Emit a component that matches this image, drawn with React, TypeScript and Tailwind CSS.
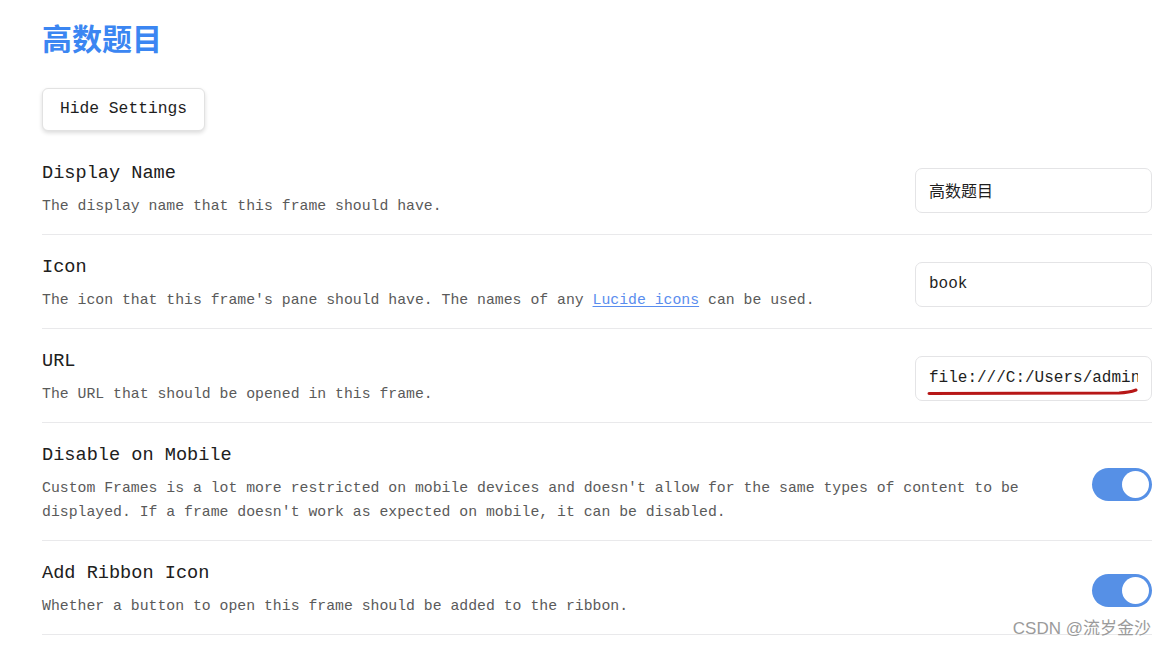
import { useState } from "react";

const mono = "font-['Liberation_Mono','Noto_Sans_CJK_SC',monospace]";

type RowProps = {
  title: string;
  children: React.ReactNode;
  control: React.ReactNode;
};

const SettingRow = ({ title, children, control }: RowProps) => {
  return (
    <div className="flex items-center gap-10 border-b border-[#e9e9eb] pt-[21px] pb-[16px]">
      <div className="flex-1 min-w-0">
        <div className="text-[18.6px] leading-[24px] text-[#202020]">{title}</div>
        <div className="mt-[8px] text-[14.8px] leading-[24px] text-[#5a5a5a]">{children}</div>
      </div>
      {control}
    </div>
  );
};

const TextInput = ({ value }: { value: string }) => (
  <input
    readOnly
    value={value}
    className={`w-[237px] h-[45px] shrink-0 rounded-[7px] border border-[#e4e4e6] bg-white px-[13px] text-[16px] text-[#1e1e1e] outline-none ${mono}`}
  />
);

const Toggle = () => {
  const [on, setOn] = useState(true);
  return (
    <button
      onClick={() => setOn(!on)}
      className={`flex h-[33px] w-[60px] shrink-0 items-center rounded-full p-[3px] ${on ? "justify-end bg-[#5690e6]" : "justify-start bg-[#d4d4d4]"}`}
    >
      <span className="h-[27px] w-[27px] rounded-full bg-white" />
    </button>
  );
};

export default function App() {
  return (
    <div className={`relative h-[647px] overflow-hidden bg-white pl-[42px] pr-[13px] ${mono}`}>
      <h1 className="pt-[17px] text-[30px] leading-[40px] font-bold text-[#3b86f2] font-['Noto_Sans_CJK_SC',sans-serif]">
        高数题目
      </h1>

      <button className="mt-[31px] h-[43px] rounded-[6px] border border-[#e2e2e2] bg-white px-[17px] text-[16.3px] text-[#1e1e1e] shadow-[0_2px_4px_rgba(0,0,0,0.14)]">
        Hide Settings
      </button>

      <div className="mt-[10px]">
        <SettingRow title="Display Name" control={<TextInput value="高数题目" />}>
          The display name that this frame should have.
        </SettingRow>

        <SettingRow title="Icon" control={<TextInput value="book" />}>
          The icon that this frame's pane should have. The names of any{" "}
          <a href="#" className="text-[#5a8dee] underline underline-offset-2">
            Lucide icons
          </a>{" "}
          can be used.
        </SettingRow>

        <SettingRow
          title="URL"
          control={
            <div className="relative shrink-0">
              <TextInput value="file:///C:/Users/admin/Desktop/notes.html" />
              <svg className="pointer-events-none absolute left-0 top-0" width="237" height="45">
                <path d="M14 37.5 L204 37 Q214 36.6 221 34" fill="none" stroke="#b71717" strokeWidth="3" strokeLinecap="round" />
              </svg>
            </div>
          }
        >
          The URL that should be opened in this frame.
        </SettingRow>

        <SettingRow title="Disable on Mobile" control={<Toggle />}>
          Custom Frames is a lot more restricted on mobile devices and doesn't allow for the same types of content to be
          displayed. If a frame doesn't work as expected on mobile, it can be disabled.
        </SettingRow>

        <SettingRow title="Add Ribbon Icon" control={<Toggle />}>
          Whether a button to open this frame should be added to the ribbon.
        </SettingRow>
      </div>

      <div className="absolute right-[14px] top-[618px] text-[17px] leading-[22px] text-[#9b9b9b] font-['Liberation_Sans','Noto_Sans_CJK_SC',sans-serif]">
        CSDN @流岁金沙
      </div>
    </div>
  );
}
